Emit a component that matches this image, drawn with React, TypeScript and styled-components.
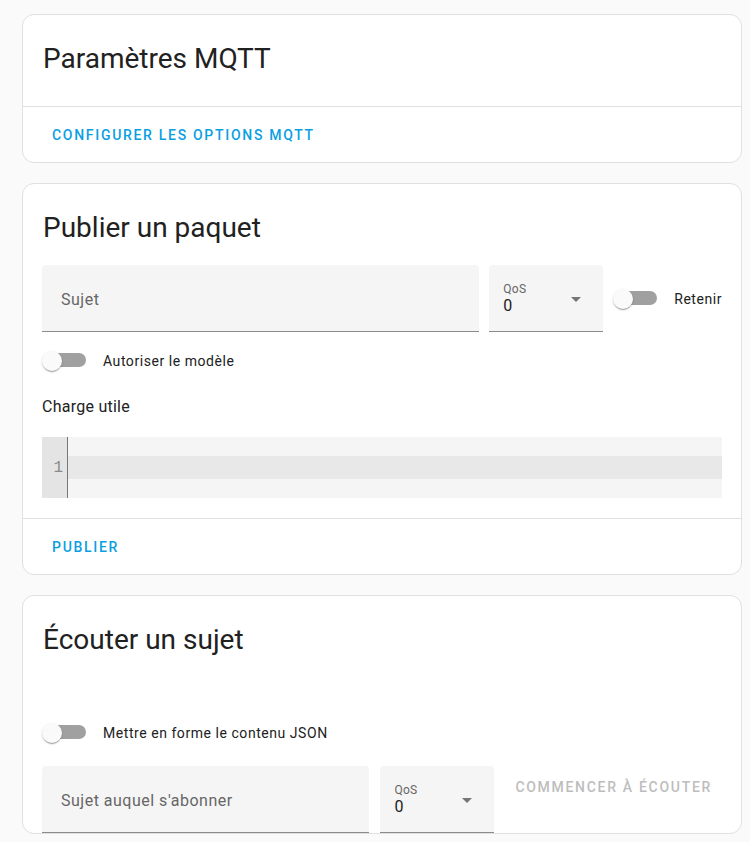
import React from "react";
import styled, { createGlobalStyle } from "styled-components";

const GlobalStyle = createGlobalStyle`
  html, body { margin: 0; padding: 0; background: #fafafa; }
  body {
    font-family: Roboto, "Noto Sans", sans-serif;
    color: #212121;
    -webkit-font-smoothing: antialiased;
  }
  * { box-sizing: border-box; }
`;

const Page = styled.main`
  display: flex;
  flex-direction: column;
  gap: 20px;
  padding: 14px 8px 9px 22px;
`;

const Card = styled.section`
  background: #ffffff;
  border: 1px solid #e0e0e0;
  border-radius: 12px;
`;

const CardHeader = styled.h1`
  margin: 0;
  padding: 24px 19px 16px 20px;
  font-size: 28px;
  line-height: 40px;
  font-weight: 400;
  color: #212121;
`;

const CardContent = styled.div<{ $pt?: number; $pb?: number }>`
  padding: ${(p) => p.$pt ?? 0}px 19px ${(p) => p.$pb ?? 0}px 19px;
  display: flex;
  flex-direction: column;
`;

const CardActions = styled.div`
  height: 56px;
  border-top: 1px solid #e0e0e0;
  display: flex;
  align-items: center;
  padding: 0 21px;
`;

const TextButton = styled.button<{ $disabled?: boolean; $mt?: number; $ml?: number; $mr?: number }>`
  border: 0;
  background: none;
  padding: 0 8px;
  height: 36px;
  margin: ${(p) => p.$mt ?? 0}px ${(p) => p.$mr ?? 0}px 0 ${(p) => p.$ml ?? 0}px;
  font-family: Roboto, "Noto Sans", sans-serif;
  font-size: 14px;
  font-weight: 500;
  letter-spacing: 1.7px;
  text-transform: uppercase;
  color: ${(p) => (p.$disabled ? "#bdbdbd" : "#0a9fe2")};
  cursor: ${(p) => (p.$disabled ? "default" : "pointer")};
  white-space: nowrap;
  flex: none;
`;

const Row = styled.div<{ $mt?: number; $gap?: number; $align?: string }>`
  display: flex;
  align-items: ${(p) => p.$align ?? "center"};
  gap: ${(p) => p.$gap ?? 0}px;
  margin-top: ${(p) => p.$mt ?? 0}px;
`;

const Field = styled.div<{ $width?: number; $ml?: number }>`
  height: 67px;
  margin-left: ${(p) => p.$ml ?? 0}px;
  background: #f5f5f5;
  border-radius: 4px 4px 0 0;
  border-bottom: 1px solid #8c8c8c;
  flex: ${(p) => (p.$width ? `0 0 ${p.$width}px` : "1 1 auto")};
  display: flex;
  align-items: center;
  padding: 3px 19px 0;
  min-width: 0;
`;

const Placeholder = styled.span`
  font-size: 16px;
  line-height: 24px;
  letter-spacing: 0.5px;
  color: #666666;
  white-space: nowrap;
`;

const SelectField = styled(Field)`
  align-items: flex-start;
  padding: 18px 22px 0 14px;
`;

const SelectBody = styled.div`
  flex: 1;
  display: flex;
  flex-direction: column;
`;

const SelectLabel = styled.span`
  font-size: 12px;
  line-height: 12px;
  letter-spacing: 0.3px;
  color: #666666;
`;

const SelectValue = styled.span`
  margin-top: -1px;
  font-size: 16px;
  line-height: 24px;
  color: #212121;
`;

const Arrow = styled.svg`
  width: 10px;
  height: 5px;
  margin-top: 14px;
  flex: none;
`;

const FormField = styled.label<{ $ml?: number }>`
  display: flex;
  align-items: center;
  height: 40px;
  gap: 17px;
  font-size: 14px;
  letter-spacing: 0.55px;
  color: #212121;
  margin-left: ${(p) => p.$ml ?? 0}px;
  white-space: nowrap;
  flex: none;
`;

const Switch = styled.span`
  position: relative;
  width: 44px;
  height: 20px;
  flex: none;
`;

const Track = styled.span`
  position: absolute;
  left: 8px;
  top: 2px;
  width: 36px;
  height: 14px;
  border-radius: 7px;
  background: #a0a0a0;
`;

const Thumb = styled.span`
  position: absolute;
  left: 0;
  top: 0;
  width: 20px;
  height: 20px;
  border-radius: 50%;
  background: #fafafa;
  box-shadow: 0 2px 1px -1px rgba(0, 0, 0, 0.2), 0 1px 1px 0 rgba(0, 0, 0, 0.14),
    0 1px 3px 0 rgba(0, 0, 0, 0.12);
`;

const SectionLabel = styled.div`
  margin-top: 14px;
  font-size: 16px;
  line-height: 24px;
  letter-spacing: 0.25px;
  color: #212121;
`;

const Editor = styled.div`
  margin-top: 18px;
  height: 61px;
  display: flex;
  background: #f5f5f5;
`;

const Gutter = styled.div`
  width: 26px;
  flex: none;
  background: #e4e4e4;
  border-right: 1px solid #777777;
  padding: 20px 4px 0 0;
  text-align: right;
  font-family: "Liberation Mono", monospace;
  font-size: 16px;
  line-height: 23px;
  color: #8a8a8a;
`;

const Lines = styled.div`
  flex: 1;
  padding-top: 19px;
`;

const ActiveLine = styled.div`
  height: 23px;
  background: #e8e8e8;
`;

const Toggle = ({ label, ml }: { label: string; ml?: number }) => (
  <FormField $ml={ml}>
    <Switch>
      <Track />
      <Thumb />
    </Switch>
    {label}
  </FormField>
);

const QosSelect = ({ width, ml }: { width: number; ml?: number }) => (
  <SelectField $width={width} $ml={ml}>
    <SelectBody>
      <SelectLabel>QoS</SelectLabel>
      <SelectValue>0</SelectValue>
    </SelectBody>
    <Arrow viewBox="7 10 10 5">
      <polygon points="7 10 12 15 17 10" fill="#757575" />
    </Arrow>
  </SelectField>
);

export default function App() {
  return (
    <>
      <GlobalStyle />
      <Page>
        <Card>
          <CardHeader>Paramètres MQTT</CardHeader>
          <CardContent $pt={11} />
          <CardActions>
            <TextButton>Configurer les options MQTT</TextButton>
          </CardActions>
        </Card>

        <Card>
          <CardHeader>Publier un paquet</CardHeader>
          <CardContent $pt={1} $pb={20}>
            <Row>
              <Field>
                <Placeholder>Sujet</Placeholder>
              </Field>
              <QosSelect width={114} ml={10} />
              <Toggle label="Retenir" ml={10} />
            </Row>
            <Row $mt={9}>
              <Toggle label="Autoriser le modèle" />
            </Row>
            <SectionLabel>Charge utile</SectionLabel>
            <Editor>
              <Gutter>1</Gutter>
              <Lines>
                <ActiveLine />
              </Lines>
            </Editor>
          </CardContent>
          <CardActions>
            <TextButton>Publier</TextButton>
          </CardActions>
        </Card>

        <Card>
          <CardHeader>Écouter un sujet</CardHeader>
          <CardContent $pt={37} $pb={0}>
            <Row>
              <Toggle label="Mettre en forme le contenu JSON" />
            </Row>
            <Row $mt={13} $gap={11} $align="flex-start">
              <Field>
                <Placeholder>Sujet auquel s'abonner</Placeholder>
              </Field>
              <QosSelect width={114} />
              <TextButton $disabled $mt={3} $ml={2} $mr={2}>
                Commencer à écouter
              </TextButton>
            </Row>
          </CardContent>
        </Card>
      </Page>
    </>
  );
}
